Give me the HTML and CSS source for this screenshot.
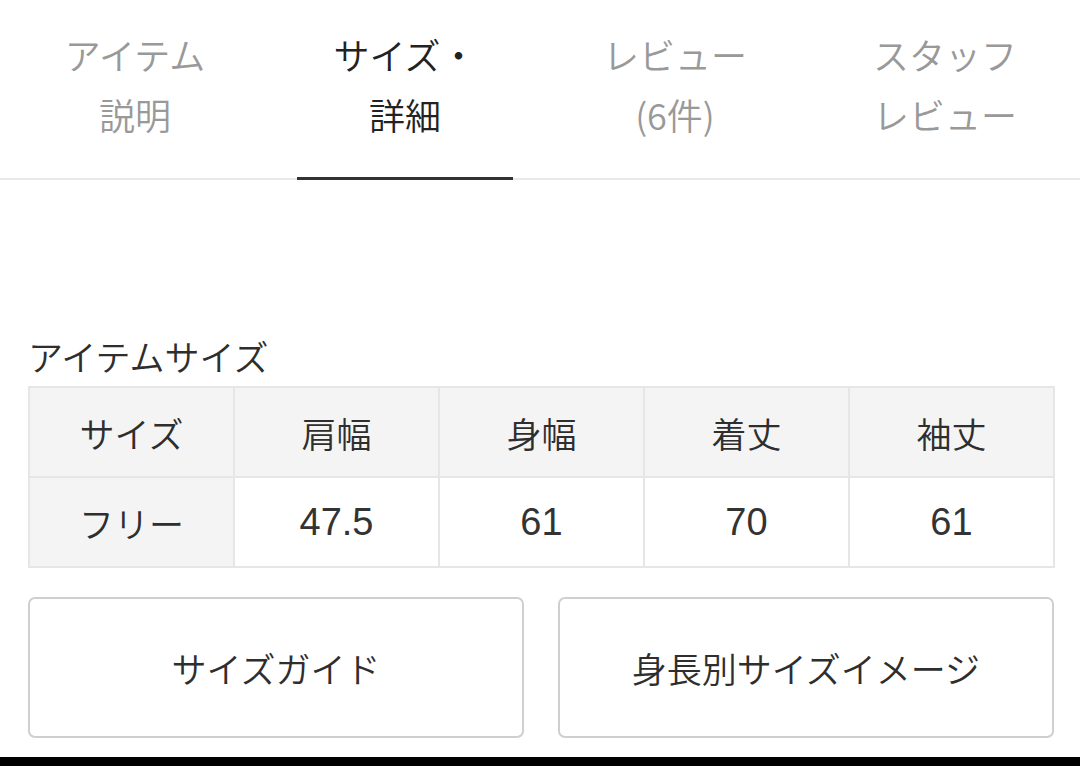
FILE: index.html
```html
<!DOCTYPE html>
<html lang="ja">
<head>
<meta charset="utf-8">
<title>サイズ・詳細</title>
<link rel="stylesheet" href="styles.css">
</head>
<body>
<div class="page">
  <nav class="tabs">
    <div class="tab">アイテム<br>説明</div>
    <div class="tab active">サイズ・<br>詳細</div>
    <div class="tab">レビュー<br>(6件)</div>
    <div class="tab">スタッフ<br>レビュー</div>
  </nav>
  <section class="content">
    <h2 class="heading">アイテムサイズ</h2>
    <table class="size-table">
      <tr class="head-row">
        <th>サイズ</th><th>肩幅</th><th>身幅</th><th>着丈</th><th>袖丈</th>
      </tr>
      <tr>
        <th class="row-label">フリー</th><td class="num">47.5</td><td class="num">61</td><td class="num">70</td><td class="num">61</td>
      </tr>
    </table>
    <div class="buttons">
      <div class="btn">サイズガイド</div>
      <div class="btn">身長別サイズイメージ</div>
    </div>
  </section>
  <div class="bottom-bar"></div>
</div>
</body>
</html>
```

FILE: styles.css
```css
* { box-sizing: border-box; }
html, body { margin: 0; padding: 0; background: #fff; }
body {
  font-family: "Noto Sans CJK JP", "Noto Sans", sans-serif;
  font-weight: 350;
  color: #333;
  width: 1080px;
  height: 766px;
  overflow: hidden;
}
.page {
  display: flex;
  flex-direction: column;
  height: 766px;
}
.tabs {
  display: grid;
  grid-template-columns: repeat(4, 1fr);
  border-bottom: 2px solid #e9e9e9;
  height: 180px;
}
.tab {
  position: relative;
  text-align: center;
  font-size: 36px;
  line-height: 60px;
  padding-top: 24px;
  color: #999;
}
.tab.active { color: #222; }
.tab.active::after {
  content: "";
  position: absolute;
  left: 10%;
  right: 10%;
  bottom: -2px;
  height: 3px;
  background: #333;
}
.content {
  padding: 156px 25px 0 28px;
  flex: 1;
}
.heading {
  margin: 0 0 10px 0;
  font-size: 35px;
  font-weight: 350;
  line-height: 40px;
  color: #2e2e2e;
}
.size-table {
  width: 100%;
  border-collapse: collapse;
  table-layout: fixed;
  border: 2px solid #e6e6e6;
}
.size-table th, .size-table td {
  border: 2px solid #e6e6e6;
  height: 90px;
  padding: 0;
  text-align: center;
  font-size: 35px;
  font-weight: 350;
  color: #2e2e2e;
}
.size-table td.num {
  font-family: "Liberation Sans", "Noto Sans CJK JP", sans-serif;
  font-weight: normal;
  font-size: 38px;
  color: #333;
}
.head-row th, .row-label { background: #f4f4f4; }
.size-table td { background: #fff; }
.buttons {
  display: grid;
  grid-template-columns: 1fr 1fr;
  gap: 34px;
  margin-top: 29px;
  padding-right: 1px;
}
.btn {
  height: 141px;
  border: 2px solid #cfcfcf;
  border-radius: 7px;
  display: flex;
  align-items: center;
  justify-content: center;
  font-size: 35px;
  color: #2e2e2e;
}
.bottom-bar {
  height: 9px;
  background: #000;
}
```
